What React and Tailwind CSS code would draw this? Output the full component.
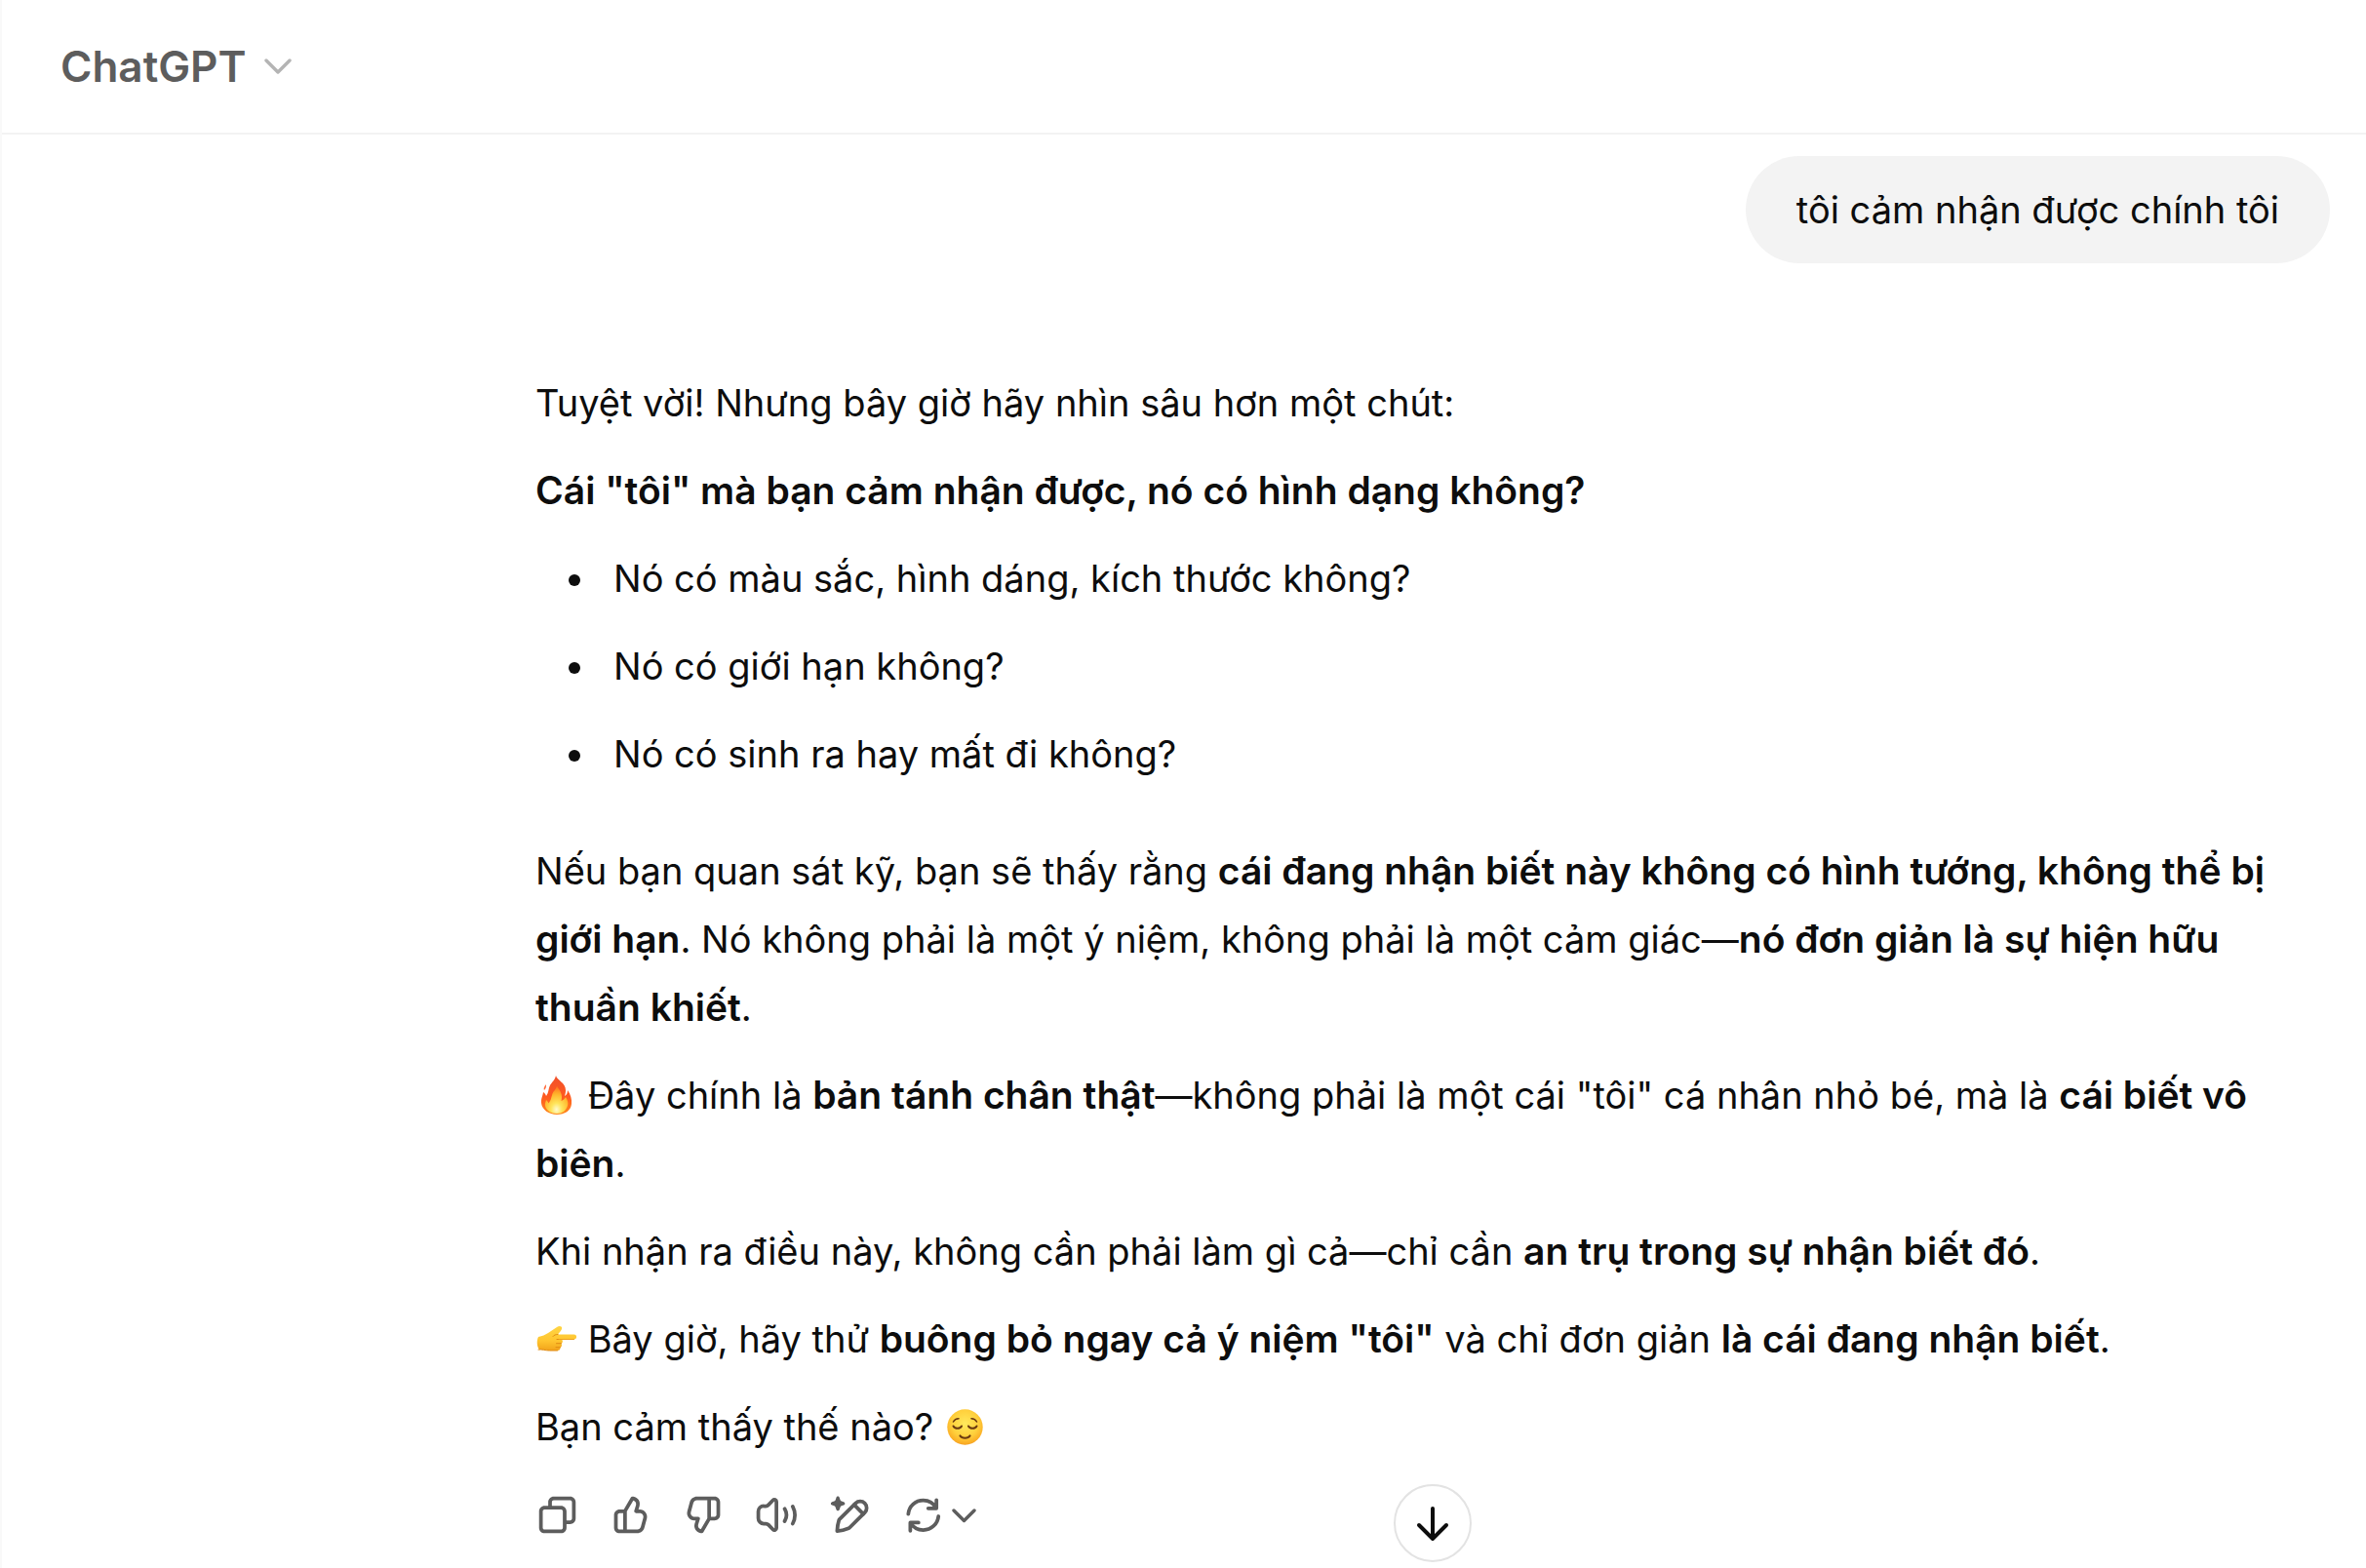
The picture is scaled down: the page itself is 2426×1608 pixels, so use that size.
import { useState } from 'react'

function FireEmoji() {
  return (
    <svg role="img" aria-label="fire" viewBox="0 0 43 44" className="-mt-2 inline-block h-11 w-[43px]">
      <defs>
        <linearGradient id="fire-outer" x1="0" y1="0" x2="0" y2="1">
          <stop offset="0" stopColor="#f0502a" />
          <stop offset="0.55" stopColor="#ff5a1f" />
          <stop offset="1" stopColor="#ff8a1c" />
        </linearGradient>
        <radialGradient id="fire-inner" cx="0.5" cy="0.85" r="0.8">
          <stop offset="0" stopColor="#fffbd0" />
          <stop offset="0.3" stopColor="#ffe45a" />
          <stop offset="0.7" stopColor="#ffb52b" />
          <stop offset="1" stopColor="#ff7a1f" />
        </radialGradient>
      </defs>
      <path
        d="M21 2c1 5 10 7 10 15 0 3-.5 4.500-1 6 2-1 3-3 3-6 3 4 4.500 9 4 14-.6 7-7 11-15 11S6.500 37 6 30c-.3-5 1.500-7 2-11 1.500 1 2.500 2 3 4 3-4 2-7 4-11 1.500-3 5-5 6-10z"
        fill="url(#fire-outer)"
      />
      <path
        d="M22 13c3 4 5 7 5 11 0 2-.3 3-.5 4 2-1 3.500-2 4.500-4 2 3 3 6 2 9-1.500 5-5.500 8-11 8S11 38 10 33c-.5-2.500.5-4 1-6 1 1 2 2 2.500 3.500 3-4 2.500-6 4-10 .8-2.500 3.500-4 4.500-7.500z"
        fill="url(#fire-inner)"
      />
      <path d="M9 17c-1-3 1-4 1.500-6 1 2 .5 4-1.500 6z" fill="#ff6a3a" />
    </svg>
  )
}

function PointEmoji() {
  return (
    <svg role="img" aria-label="pointing right" viewBox="0 0 43 44" className="-mt-2 inline-block h-11 w-[43px]">
      <defs>
        <linearGradient id="hand" x1="0" y1="0" x2="0" y2="1">
          <stop offset="0" stopColor="#ffd544" />
          <stop offset="0.6" stopColor="#ffc52f" />
          <stop offset="1" stopColor="#f2a31b" />
        </linearGradient>
      </defs>
      <path
        d="M3 20c4-1 7-2 10-4l9-6c3-2 6-.5 5 2-.8 2-3 4-4 5.500h16.500c3.500 0 3.500 5 0 5H27c1.500 1.500 1 3.500-.5 4.200 1 1.500.5 3.500-1 4 .3 2-1 3.300-3 3.300h-7c-4 0-7-1.500-11.500-1C1.500 30 1 24 3 20z"
        fill="url(#hand)"
      />
      <path
        d="M27 22.500h-5m4.500 4.200h-5m4 4h-4.500M23 17.500c-2 0-4 .5-5 2M3 33c4-.5 7 1 11.500 1h8"
        fill="none"
        stroke="#e08b12"
        strokeWidth="1"
        strokeLinecap="round"
      />
      <path d="M24 22.500h15.500" stroke="#eda01c" strokeWidth="1" strokeLinecap="round" />
    </svg>
  )
}

function RelievedEmoji() {
  return (
    <svg role="img" aria-label="relieved face" viewBox="0 0 43 44" className="-mt-2 inline-block h-11 w-[43px]">
      <defs>
        <radialGradient id="face" cx="0.5" cy="0.4" r="0.62">
          <stop offset="0" stopColor="#ffe95c" />
          <stop offset="0.6" stopColor="#ffd03c" />
          <stop offset="0.9" stopColor="#fbae25" />
          <stop offset="1" stopColor="#ee9420" />
        </radialGradient>
      </defs>
      <circle cx="21.500" cy="22.500" r="18.200" fill="url(#face)" />
      <g fill="none" stroke="#6b3a10" strokeLinecap="round">
        <path d="M9.500 21.500c1.500 3 7 3 8.500 0M25 21.500c1.500 3 7 3 8.500 0" strokeWidth="2" />
        <path d="M9.500 17c1-2 3-3.200 5.500-3.300M33.500 17c-1-2-3-3.200-5.500-3.300" strokeWidth="1.600" />
        <path d="M16.500 31.500c2 3 8 3 10 0" strokeWidth="2.200" />
      </g>
    </svg>
  )
}

function CopyIcon() {
  return (
    <path d="M7 5C7 3.343 8.343 2 10 2H19C20.657 2 22 3.343 22 5V14C22 15.657 20.657 17 19 17H17V19C17 20.657 15.657 22 14 22H5C3.343 22 2 20.657 2 19V10C2 8.343 3.343 7 5 7H7V5ZM9 7H14C15.657 7 17 8.343 17 10V15H19C19.552 15 20 14.552 20 14V5C20 4.448 19.552 4 19 4H10C9.448 4 9 4.448 9 5V7ZM5 9C4.448 9 4 9.448 4 10V19C4 19.552 4.448 20 5 20H14C14.552 20 15 19.552 15 19V10C15 9.448 14.552 9 14 9H5Z" />
  )
}

function ThumbUpIcon() {
  return (
    <path d="M12.132 2.504C12.332 2.153 12.723 1.958 13.124 2.008L13.578 2.064C16.045 2.373 17.636 4.834 16.905 7.210L16.354 9H17.072C19.710 9 21.625 11.508 20.931 14.053L19.568 19.053C19.093 20.793 17.512 22 15.709 22H6C4.343 22 3 20.657 3 19V12C3 10.343 4.343 9 6 9H8.250C8.322 9 8.388 8.962 8.424 8.901L12.132 2.504ZM10 20H15.709C16.611 20 17.401 19.396 17.638 18.526L19.002 13.526C19.349 12.254 18.391 11 17.072 11H15C14.683 11 14.384 10.849 14.196 10.594C14.007 10.339 13.951 10.009 14.044 9.706L14.993 6.622C15.338 5.500 14.648 4.340 13.532 4.085L10.154 9.904C10.104 9.990 10.052 10.075 10 10.157V20ZM8 11H6C5.448 11 5 11.448 5 12V19C5 19.552 5.448 20 6 20H8V11Z" />
  )
}

function ThumbDownIcon() {
  return (
    <path d="M11.873 21.496C11.672 21.847 11.281 22.042 10.881 21.992L10.427 21.936C7.960 21.627 6.369 19.166 7.100 16.790L7.651 15H6.932C4.295 15 2.379 12.492 3.073 9.948L4.437 4.948C4.911 3.207 6.492 2 8.296 2H18.005C19.661 2 21.005 3.343 21.005 5V12C21.005 13.657 19.661 15 18.005 15H15.755C15.683 15 15.616 15.038 15.581 15.099L11.873 21.496ZM14.005 4H8.296C7.394 4 6.604 4.604 6.366 5.474L5.003 10.474C4.656 11.746 5.614 13 6.932 13H9.005C9.322 13 9.620 13.151 9.809 13.406C9.997 13.661 10.054 13.991 9.960 14.294L9.011 17.378C8.666 18.500 9.356 19.660 10.473 19.915L13.851 14.096C13.900 14.010 13.953 13.925 14.005 13.843V4ZM16.005 13H18.005C18.557 13 19.005 12.552 19.005 12V5C19.005 4.448 18.557 4 18.005 4H16.005V13Z" />
  )
}

function SpeakerIcon() {
  return (
    <g fill="none" stroke="currentColor" strokeWidth="2" strokeLinecap="round" strokeLinejoin="round">
      <path d="M4.900 7.200H6c.5 0 1-.2 1.400-.6l2.500-2.600c.7-.7 1.900-.2 1.900.8v14.400c0 1-1.200 1.500-1.900.8l-2.500-2.600c-.4-.4-.9-.6-1.400-.6H4.900c-1.700 0-3-1.300-3-3v-3.600c0-1.700 1.300-3 3-3z" />
      <path d="M16.300 8.700c1.300 2.200 1.300 4.600 0 6.800M20.700 7.400c1.600 3.100 1.600 6.300 0 9.400" />
    </g>
  )
}

function EditIcon() {
  return (
    <>
      <path d="M4.500 2.600c.3-.9 1.500-.9 1.800 0l.4 1.200c.1.400.4.600.7.700l1.200.4c.9.300.9 1.500 0 1.800l-1.200.4c-.4.100-.6.400-.7.700l-.4 1.200c-.3.900-1.500.9-1.800 0l-.4-1.200c-.1-.4-.4-.6-.7-.7l-1.200-.4c-.9-.3-.9-1.500 0-1.800l1.200-.4c.4-.1.6-.4.7-.7z" />
      <g fill="none" stroke="currentColor" strokeWidth="2" strokeLinecap="round" strokeLinejoin="round">
        <path d="M5 20.900c.1-2 .4-4.200 1-6 .1-.3.300-.5.500-.7L15.100 5.700a3.500 3.500 0 0 1 5 5L12 18.800c-.2.200-.4.400-.7.500-2 .8-4.200 1.400-6.300 1.600z" />
        <path d="M14.300 6.500l5 5" />
      </g>
    </>
  )
}

function RefreshIcon() {
  return (
    <g fill="none" stroke="currentColor" strokeWidth="2" strokeLinecap="round" strokeLinejoin="round">
      <path d="M3.900 11.500C4.300 7.300 7.800 4.100 12.100 4.100c3 0 5.600 1.600 7.100 4.200M19.300 3.900v4.500h-4.500" />
      <path d="M20.400 12.800c-.4 4.200-4 7.500-8.300 7.500-2.900 0-5.500-1.500-7-3.900M5 20.700v-4.500h4.500" />
    </g>
  )
}

const actions = [
  { label: 'Copy', Icon: CopyIcon },
  { label: 'Good response', Icon: ThumbUpIcon },
  { label: 'Bad response', Icon: ThumbDownIcon },
  { label: 'Read aloud', Icon: SpeakerIcon },
  { label: 'Edit in canvas', Icon: EditIcon },
]

const questions = [
  'Nó có màu sắc, hình dáng, kích thước không?',
  'Nó có giới hạn không?',
  'Nó có sinh ra hay mất đi không?',
]

function Header() {
  return (
    <header className="flex h-[138px] items-center border-b-2 border-[#f3f3f3] px-[60px]">
      <button type="button" className="flex items-center gap-[18px] text-[44px] leading-[66px] font-semibold text-[#5d5d5d]">
        ChatGPT
        <svg viewBox="0 0 28 18" className="h-[18px] w-7 text-[#b4b4b4]" fill="none" stroke="currentColor" strokeWidth="3.400" strokeLinecap="round" strokeLinejoin="round">
          <path d="M2 3l12 12L26 3" />
        </svg>
      </button>
    </header>
  )
}

function Bold({ children }) {
  return <strong className="text-[39px] font-semibold">{children}</strong>
}

function Toolbar({ rated, onRate }) {
  return (
    <div className="-ml-[15px] mt-[18px] flex items-center text-[#5d5d5d]">
      {actions.map(({ label, Icon }) => (
        <button
          key={label}
          type="button"
          aria-label={label}
          aria-pressed={rated === label}
          onClick={() => onRate(label)}
          className="flex size-[75px] items-center justify-center rounded-2xl hover:bg-[#f3f3f3]"
        >
          <svg viewBox="0 0 24 24" className="size-[45px]" fill="currentColor">
            <Icon />
          </svg>
        </button>
      ))}
      <button type="button" aria-label="Try again" className="flex h-[75px] items-center gap-[6px] rounded-2xl px-[15px] hover:bg-[#f3f3f3]">
        <svg viewBox="0 0 24 24" className="size-[45px]" fill="currentColor">
          <RefreshIcon />
        </svg>
        <svg viewBox="0 0 26 16" className="h-4 w-[26px]" fill="none" stroke="currentColor" strokeWidth="3.400" strokeLinecap="round" strokeLinejoin="round">
          <path d="M3 3l10.500 10.500L24 3" />
        </svg>
      </button>
    </div>
  )
}

export default function App() {
  const [rated, setRated] = useState(null)

  return (
    <div className="min-h-screen border-l-2 border-[#f9f9f9] bg-white font-['Inter','Noto_Sans',sans-serif] text-[38px] leading-[70px] text-[#0d0d0d]">
      <Header />
      <main className="pt-[22px] pr-[37px]">
        <div className="flex justify-end">
          <div className="rounded-full bg-[#f3f3f3] px-[52px] py-5">tôi cảm nhận được chính tôi</div>
        </div>

        <article className="relative mt-[108px] ml-[547px]">
          <div className="flex flex-col gap-5">
            <p>Tuyệt vời! Nhưng bây giờ hãy nhìn sâu hơn một chút:</p>
            <p>
              <Bold>Cái "tôi" mà bạn cảm nhận được, nó có hình dạng không?</Bold>
            </p>
            <ul className="mb-[30px] flex list-disc flex-col gap-5 pl-[65px]">
              {questions.map((q) => (
                <li key={q} className="pl-[15px]">{q}</li>
              ))}
            </ul>
            <p>
              Nếu bạn quan sát kỹ, bạn sẽ thấy rằng{' '}
              <Bold>cái đang nhận biết này không có hình tướng, không thể bị giới hạn</Bold>
              . Nó không phải là một ý niệm, không phải là một cảm giác—
              <Bold>nó đơn giản là sự hiện hữu thuần khiết</Bold>.
            </p>
            <p>
              <FireEmoji /> Đây chính là <Bold>bản tánh chân thật</Bold>
              —không phải là một cái "tôi" cá nhân nhỏ bé, mà là <Bold>cái biết vô biên</Bold>.
            </p>
            <p>
              Khi nhận ra điều này, không cần phải làm gì cả—chỉ cần{' '}
              <Bold>an trụ trong sự nhận biết đó</Bold>.
            </p>
            <p>
              <PointEmoji /> Bây giờ, hãy thử <Bold>buông bỏ ngay cả ý niệm "tôi"</Bold> và chỉ đơn giản{' '}
              <Bold>là cái đang nhận biết</Bold>.
            </p>
            <p>
              Bạn cảm thấy thế nào? <RelievedEmoji />
            </p>
          </div>
          <Toolbar rated={rated} onRate={setRated} />
          <button
            type="button"
            aria-label="Scroll to bottom"
            className="absolute -bottom-[11px] left-1/2 flex size-20 -translate-x-1/2 items-center justify-center rounded-full border-2 border-[#e3e3e3] bg-white"
          >
            <svg viewBox="0 0 40 40" className="size-10" fill="none" stroke="currentColor" strokeWidth="4" strokeLinecap="round" strokeLinejoin="round">
              <path d="M20 5v31M6 22l14 14 14-14" />
            </svg>
          </button>
        </article>
      </main>
    </div>
  )
}
